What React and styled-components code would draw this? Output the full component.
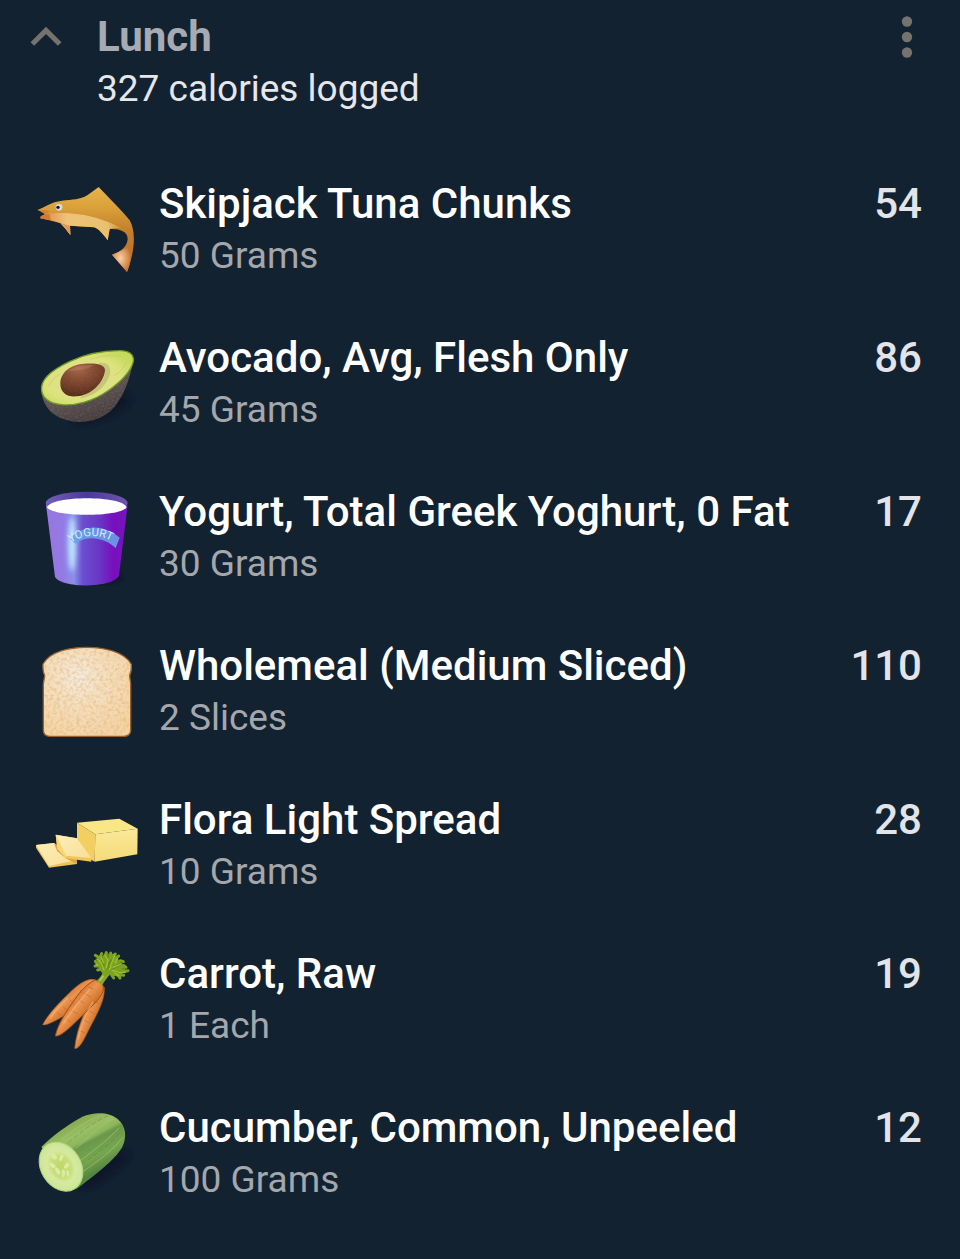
import React, { useState } from 'react';
import styled, { createGlobalStyle } from 'styled-components';

const GlobalStyle = createGlobalStyle`
  * {
    box-sizing: border-box;
  }
  body {
    margin: 0;
    background: #132231;
    font-family: Roboto, "Liberation Sans", sans-serif;
  }
`
const Page = styled.main`
  width: 100%;
  padding-top: 11px;
  color: #ffffff;
`
const Header = styled.header`
  display: flex;
  align-items: flex-start;
  padding: 0 22px 0 15px;
  margin-bottom: 38px;
`
const IconButton = styled.button`
  display: flex;
  flex-shrink: 0;
  padding: 0;
  border: 0;
  margin-top: -5px;
  background: none;
  color: #757370;
  cursor: pointer;
`
const ButtonIcon = styled.svg`
  width: 62px;
  height: 62px;
  fill: currentColor;
`
const HeaderText = styled.div`
  flex: 1;
  min-width: 0;
  padding-left: 20px;
`
const MealName = styled.h1`
  margin: 0;
  font-size: 42px;
  font-weight: 700;
  line-height: 52px;
  color: #a6abb3;
`
const MealTotal = styled.p`
  margin: 0;
  font-size: 37px;
  line-height: 52px;
  color: #e6e7ea;
`
const FoodList = styled.ul`
  margin: 0;
  padding: 0;
  list-style: none;
`
const FoodRow = styled.li`
  display: flex;
  align-items: center;
  min-height: 154px;
  padding: 0 38px 0 30px;
`
const Picture = styled.svg`
  flex-shrink: 0;
  width: 115px;
  height: 108px;
  margin-right: 14px;
  overflow: visible;
`
const FoodText = styled.div`
  flex: 1;
  min-width: 0;
`
const TitleLine = styled.div`
  display: flex;
  justify-content: space-between;
  gap: 16px;
  font-size: 42px;
  font-weight: 500;
  line-height: 52px;
`
const FoodName = styled.h2`
  margin: 0;
  font: inherit;
`
const Calories = styled.span`
  color: #e2e4e8;
`
const Amount = styled.p`
  margin: 0;
  font-size: 37px;
  line-height: 52px;
  color: #a4a7ab;
`

const Tuna = () => (
  <Picture viewBox="0 -6 345 324" aria-hidden="true">
    <defs>
      <linearGradient id="tunaBody" x1="0" y1="0" x2="0" y2="1">
        <stop offset="0" stopColor="#e6b548" />
        <stop offset="0.25" stopColor="#d9a03a" />
        <stop offset="0.5" stopColor="#c4802c" />
        <stop offset="1" stopColor="#b96d28" />
      </linearGradient>
      <radialGradient id="tunaTail" cx="0.45" cy="0.45" r="0.6">
        <stop offset="0" stopColor="#fbd2a4" />
        <stop offset="1" stopColor="#c66f2f" />
      </radialGradient>
      <linearGradient id="tunaBelly" x1="0" y1="0" x2="1" y2="0">
        <stop offset="0" stopColor="#e19a54" />
        <stop offset="0.25" stopColor="#efc27b" />
        <stop offset="0.8" stopColor="#e9c070" />
        <stop offset="1" stopColor="#cf8a35" />
      </linearGradient>
    </defs>
    <path d="M22 96 C48 86 62 72 96 68 C128 65 150 65 172 52 L206 27 C240 64 278 99 299 127 C317 157 317 214 291 282 L246 230 C272 222 291 207 293 184 C294 161 270 151 239 153 L233 187 C219 167 206 153 193 148 L120 143 L121 171 C111 158 101 145 91 135 C65 129 48 125 31 121 L32 115 L45 109 C43 103 38 101 22 96 Z" fill="url(#tunaBody)" />
    <path d="M56 108 C114 99 208 112 276 152 C262 149 251 150 239 153 L233 187 C219 167 206 153 193 148 L120 143 L121 171 C111 158 101 145 91 135 C75 131 66 128 60 124 Z" fill="url(#tunaBelly)" />
    <path d="M31 121 L33 115 L45 109 L58 108 L62 127 Z" fill="#d27a35" />
    <path d="M91 135 L120 143 L121 171 C111 158 101 145 91 135 Z" fill="#e09a56" />
    <path d="M246 230 C266 223 282 214 294 207 C307 229 302 256 291 282 Z" fill="url(#tunaTail)" />
    <path d="M24 96 L45 109 L60 100 C49 95 36 96 24 96 Z" fill="#d9812f" />
    <circle cx="87" cy="88" r="10" fill="#d9dde0" />
    <circle cx="84" cy="88" r="5" fill="#14181c" />
  </Picture>
)

const Avocado = () => (
  <Picture viewBox="0 -15 345 324" aria-hidden="true">
    <defs>
      <linearGradient id="avoSkin" x1="0" y1="0" x2="0.5" y2="1">
        <stop offset="0" stopColor="#67705b" />
        <stop offset="0.6" stopColor="#5d5353" />
        <stop offset="1" stopColor="#443c3d" />
      </linearGradient>
      <radialGradient id="avoFlesh" cx="0.45" cy="0.52" r="0.6">
        <stop offset="0" stopColor="#e4df93" />
        <stop offset="0.7" stopColor="#dce27d" />
        <stop offset="1" stopColor="#c6da5e" />
      </radialGradient>
      <radialGradient id="avoStone" cx="0.4" cy="0.15" r="0.85">
        <stop offset="0" stopColor="#a5664a" />
        <stop offset="0.5" stopColor="#7f462d" />
        <stop offset="1" stopColor="#552a18" />
      </radialGradient>
      <filter id="avoBlur" x="-20%" y="-50%" width="140%" height="200%">
        <feGaussianBlur stdDeviation="9" />
      </filter>
      <filter id="avoGrain" x="0" y="0" width="100%" height="100%" colorInterpolationFilters="sRGB">
        <feTurbulence type="fractalNoise" baseFrequency="0.18" numOctaves="2" />
        <feColorMatrix values="0 0 0 0 0.58  0 0 0 0 0.5  0 0 0 0 0.46  1.6 0 0 0 -0.65" />
        <feComposite in2="SourceGraphic" operator="in" />
      </filter>
    </defs>
    <ellipse cx="215" cy="222" rx="95" ry="30" fill="#0b1726" filter="url(#avoBlur)" transform="rotate(-22 215 222)" />
    <path d="M33 161 C36 205 58 235 94 250 C139 270 202 263 242 228 C277 196 299 137 311 73 Z" fill="url(#avoSkin)" />
    <path d="M33 161 C36 205 58 235 94 250 C139 270 202 263 242 228 C277 196 299 137 311 73 Z" fill="#fff" filter="url(#avoGrain)" opacity="0.45" />
    <path d="M35 167 C29 132 69 103 120 79 C165 58 217 47 267 47 C296 46 313 58 310 79 C304 106 273 140 233 168 C190 198 138 213 94 209 C60 206 38 190 35 167 Z" fill="url(#avoFlesh)" stroke="#6f9a26" strokeWidth="4" />
    <path d="M205 84 C231 79 244 94 240 116 C230 158 185 187 147 190 C181 174 220 143 226 111 Z" fill="#aeb06d" opacity="0.55" />
    <path d="M91 147 C91 109 125 88 163 86 C197 84 226 88 225 107 C221 142 185 180 141 184 C112 187 92 174 91 147 Z" fill="url(#avoStone)" />
    <path d="M91 147 C91 109 125 88 163 86 C197 84 226 88 225 107 C221 142 185 180 141 184 C112 187 92 174 91 147 Z" fill="#fff" filter="url(#avoGrain)" opacity="0.25" />
    <path d="M112 109 C133 91 164 90 190 91 C175 104 138 108 112 109 Z" fill="#c58e71" opacity="0.35" />
    <path d="M180 73 C213 63 247 59 274 64 M253 122 C274 108 286 92 290 80 M56 154 C64 136 77 125 90 117" fill="none" stroke="#c3cb62" strokeWidth="2" />
  </Picture>
)

const Yogurt = () => (
  <Picture viewBox="0 0 345 324" aria-hidden="true">
    <defs>
      <linearGradient id="potSide" x1="0" y1="0" x2="1" y2="0">
        <stop offset="0" stopColor="#9877df" />
        <stop offset="0.2" stopColor="#9479e5" />
        <stop offset="0.34" stopColor="#8a90ea" />
        <stop offset="0.45" stopColor="#6a4fcf" />
        <stop offset="0.65" stopColor="#6a36c5" />
        <stop offset="0.82" stopColor="#780fbd" />
        <stop offset="1" stopColor="#7416b9" />
      </linearGradient>
      <linearGradient id="potRim" x1="0" y1="0" x2="1" y2="0">
        <stop offset="0" stopColor="#7560b8" />
        <stop offset="0.5" stopColor="#49389e" />
        <stop offset="1" stopColor="#6f55ae" />
      </linearGradient>
      <filter id="potBlur" x="-100%" y="-30%" width="300%" height="160%">
        <feGaussianBlur stdDeviation="8" />
      </filter>
      <path id="potArc" d="M122 177 Q186 132 262 181" />
    </defs>
    <ellipse cx="215" cy="280" rx="60" ry="16" fill="#0b1624" filter="url(#potBlur)" />
    <path d="M48 62 L75 278 C91 313 253 314 267 274 L293 62 Z" fill="url(#potSide)" />
    <ellipse cx="126" cy="180" rx="11" ry="82" fill="#bfeaff" filter="url(#potBlur)" />
    <ellipse cx="170" cy="57" rx="123" ry="34" fill="url(#potRim)" />
    <path d="M51 70 C65 34 277 34 290 70 C271 100 70 100 51 70 Z" fill="#fefeff" />
    <path d="M120 163 C160 122 219 119 269 161 L257 192 C220 160 173 153 136 179 Z" fill="#69a0e8" opacity="0.9" />
    <text fontFamily="Roboto, sans-serif" fontSize="34" fontWeight="400" fill="#d9ecff">
      <textPath href="#potArc">YOGURT</textPath>
    </text>
  </Picture>
)

const Bread = () => (
  <Picture viewBox="0 0 345 324" aria-hidden="true">
    <defs>
      <radialGradient id="breadCrumb" cx="0.4" cy="0.33" r="0.7">
        <stop offset="0" stopColor="#f3eadf" />
        <stop offset="0.45" stopColor="#f3dfc0" />
        <stop offset="1" stopColor="#f3d5a8" />
      </radialGradient>
      <filter id="breadGrain" x="0" y="0" width="100%" height="100%" colorInterpolationFilters="sRGB">
        <feTurbulence type="fractalNoise" baseFrequency="0.1" numOctaves="2" />
        <feColorMatrix values="0 0 0 0 0.9  0 0 0 0 0.68  0 0 0 0 0.4  3 0 0 0 -1.25" />
        <feComposite in2="SourceGraphic" operator="in" />
      </filter>
    </defs>
    <path d="M39 78 C61 40 119 28 171 28 C225 28 283 42 304 79 C305 94 303 104 299 112 C299 122 302 130 302 140 L302 278 C301 290 293 295 280 295 L60 295 C46 295 40 287 40 276 L40 140 C40 130 44 122 44 112 C40 104 38 94 39 78 Z" fill="url(#breadCrumb)" stroke="#96612e" strokeWidth="4" />
    <path d="M42 80 C62 42 119 31 171 31 C225 31 280 45 301 81 L296 112 L299 140 L299 277 C298 287 291 292 280 292 L60 292 C48 292 43 286 43 276 L43 140 L47 112 Z" fill="#fff" filter="url(#breadGrain)" opacity="0.45" />
  </Picture>
)

const Spread = () => (
  <Picture viewBox="0 -38 345 324" aria-hidden="true">
    <defs>
      <linearGradient id="spreadFront" x1="0" y1="0" x2="0" y2="1">
        <stop offset="0" stopColor="#fae998" />
        <stop offset="1" stopColor="#f5db78" />
      </linearGradient>
      <linearGradient id="spreadSlice" x1="0" y1="0" x2="1" y2="1">
        <stop offset="0" stopColor="#fdedb8" />
        <stop offset="1" stopColor="#f9df98" />
      </linearGradient>
    </defs>
    <path d="M18 121 L72 115 L140 166 L141 178 L57 189 L18 129 Z" fill="#eec354" />
    <path d="M18 121 L72 115 L140 166 L57 184 Z" fill="url(#spreadSlice)" />
    <path d="M72 117 L82 140 L107 161 L141 178 L141 165 L100 127 Z" fill="#dba544" />
    <path d="M141 54 L268 42 L323 72 L196 89 Z" fill="#f9e785" />
    <path d="M141 54 L196 89 L194 171 L181 164 L141 101 Z" fill="#f3cf61" />
    <path d="M196 89 L323 72 L322 149 L194 171 Z" fill="url(#spreadFront)" />
    <path d="M77 90 L141 101 L184 160 L184 171 L108 161 L82 132 Z" fill="#efc65a" />
    <path d="M77 90 L141 101 L184 160 L108 153 Z" fill="url(#spreadSlice)" />
    <path d="M77 90 L108 153 L108 161 L82 132 Z" fill="#f5d777" />
  </Picture>
)

const Carrot = () => (
  <Picture viewBox="0 8 345 324" aria-hidden="true">
    <defs>
      <linearGradient id="carrotRoot" x1="0.2" y1="0.2" x2="0.8" y2="0.8">
        <stop offset="0.2" stopColor="#cf7430" />
        <stop offset="0.45" stopColor="#ea9450" />
        <stop offset="0.75" stopColor="#c8691f" />
      </linearGradient>
    </defs>
    <path d="M197 125 C179 179 142 237 134 315 C143 319 157 300 169 274 C195 221 226 176 223 132 Z" fill="url(#carrotRoot)" stroke="#a8571e" strokeWidth="2" />
    <path d="M196 109 C167 103 139 129 118 149 C83 182 56 211 38 244 C51 250 102 217 139 196 C174 174 207 145 196 109 Z" fill="url(#carrotRoot)" stroke="#a8571e" strokeWidth="2" />
    <path d="M193 111 C162 127 139 160 118 192 C98 222 83 247 76 278 C95 281 130 242 166 208 C204 172 224 149 220 130 C214 115 205 109 193 111 Z" fill="url(#carrotRoot)" stroke="#a04c16" strokeWidth="3" />
    <path d="M120 170 L133 184 M100 190 L111 202 M82 207 L91 216 M164 151 L184 162 M148 169 L163 181 M125 202 L142 211 M110 227 L122 237 M192 174 L207 180 M178 203 L193 211 M163 231 L177 238 M151 263 L163 268 M150 140 L156 148 M176 132 L189 137" stroke="#bb5f20" strokeWidth="3" strokeLinecap="round" opacity="0.5" />
    <path d="M112 165 C88 188 71 206 62 223 M179 138 C149 173 119 209 101 239 M188 177 C165 216 151 250 145 286" fill="none" stroke="#ffcb98" strokeWidth="5" strokeLinecap="round" opacity="0.4" />
    <path d="M198 115 C209 104 216 96 222 81 L242 91 C230 104 223 114 217 125 C210 119 205 116 198 115 Z" fill="#86a531" />
    <path d="M209 112 L229 86" stroke="#b3c94f" strokeWidth="5" />
    <path d="M224 94 L206 78 L204 60 L196 46 L214 40 L226 30 L246 32 L262 40 L268 54 L284 66 L286 80 L272 94 L254 98 L236 92 Z" fill="#688c1e" />
    <g fill="none" stroke="#7ca320" strokeWidth="9" strokeLinecap="round" strokeLinejoin="round">
      <path d="M224 94 L208 66 L196 54 M210 68 L195 68 M209 65 L209 44 L196 36 M209 45 L215 31 M224 92 L229 62 L222 44 L229 28 M229 58 L242 41 L242 29 M240 44 L256 32 M228 92 L249 67 L252 49 L266 38 M250 65 L271 52 L280 55 M234 89 L259 78 L282 67 L288 72 M260 78 L284 84 L294 82 M242 89 L264 96 L270 104 M243 91 L251 104 M263 93 L281 96 M215 77 L203 80" />
    </g>
    <g fill="none" stroke="#a3c032" strokeWidth="4" strokeLinecap="round">
      <path d="M222 80 L214 59 L203 48 M229 72 L234 52 L226 37 M241 67 L249 49 L254 36 M250 72 L273 62 M247 82 L270 88 L286 87 M204 66 L198 62 M254 89 L266 97 M221 58 L213 41 M262 46 L256 58 M238 78 L243 70" />
    </g>
  </Picture>
)

const Cucumber = () => (
  <Picture viewBox="0 -9 345 324" aria-hidden="true">
    <defs>
      <linearGradient id="cukeSkin" x1="0.35" y1="0.15" x2="0.7" y2="0.75">
        <stop offset="0" stopColor="#86ad50" />
        <stop offset="0.22" stopColor="#9abf66" />
        <stop offset="0.38" stopColor="#8db65c" />
        <stop offset="0.45" stopColor="#6a984a" />
        <stop offset="0.75" stopColor="#77a650" />
        <stop offset="1" stopColor="#568541" />
      </linearGradient>
      <radialGradient id="cukeFace">
        <stop offset="0" stopColor="#bfd866" />
        <stop offset="0.45" stopColor="#c6df7c" />
        <stop offset="0.65" stopColor="#d7e9a1" />
        <stop offset="1" stopColor="#cbe698" />
      </radialGradient>
      <filter id="cukeBlur" x="-20%" y="-50%" width="140%" height="200%">
        <feGaussianBlur stdDeviation="10" />
      </filter>
    </defs>
    <ellipse cx="222" cy="200" rx="92" ry="26" fill="#0c1929" filter="url(#cukeBlur)" transform="rotate(-35 222 200)" />
    <path d="M34 132 C66 99 116 63 157 41 C192 26 238 26 263 48 C289 70 291 103 277 132 C257 169 190 221 139 258 Z" fill="url(#cukeSkin)" />
    <path d="M92 111 C135 76 183 45 219 36 M137 138 C179 98 218 62 249 48 M153 171 C201 135 243 103 267 74 M158 206 C205 174 249 142 278 103" fill="none" stroke="#a6c878" strokeWidth="3" opacity="0.6" />
    <path d="M115 119 C158 83 196 54 233 39 M154 184 C205 149 247 117 273 86" fill="none" stroke="#527f3c" strokeWidth="3" strokeDasharray="14 8" opacity="0.4" />
    <ellipse cx="93" cy="191" rx="60" ry="78" transform="rotate(-32 93 191)" fill="url(#cukeFace)" stroke="#b4d779" strokeWidth="3" />
    <g fill="#dbeca2">
      <ellipse cx="72" cy="160" rx="7" ry="11" transform="rotate(-35 72 160)" />
      <ellipse cx="94" cy="164" rx="5" ry="11" transform="rotate(20 94 164)" />
      <ellipse cx="67" cy="187" rx="6" ry="11" transform="rotate(-52 67 187)" />
      <ellipse cx="83" cy="204" rx="6" ry="11" transform="rotate(-28 83 204)" />
      <ellipse cx="100" cy="211" rx="5" ry="12" />
      <ellipse cx="113" cy="211" rx="4" ry="10" transform="rotate(-10 113 211)" />
      <ellipse cx="110" cy="188" rx="6" ry="10" transform="rotate(35 110 188)" />
    </g>
  </Picture>
)

const foods = [
  { name: 'Skipjack Tuna Chunks', amount: '50 Grams', calories: 54, Art: Tuna },
  { name: 'Avocado, Avg, Flesh Only', amount: '45 Grams', calories: 86, Art: Avocado },
  { name: 'Yogurt, Total Greek Yoghurt, 0 Fat', amount: '30 Grams', calories: 17, Art: Yogurt },
  { name: 'Wholemeal (Medium Sliced)', amount: '2 Slices', calories: 110, Art: Bread },
  { name: 'Flora Light Spread', amount: '10 Grams', calories: 28, Art: Spread },
  { name: 'Carrot, Raw', amount: '1 Each', calories: 19, Art: Carrot },
  { name: 'Cucumber, Common, Unpeeled', amount: '100 Grams', calories: 12, Art: Cucumber },
]

const App = () => {
  const [open, setOpen] = useState(true)

  return (
    <Page>
      <GlobalStyle />
      <Header>
        <IconButton type="button" aria-label="Toggle lunch" aria-expanded={open} onClick={() => setOpen(!open)}>
          <ButtonIcon viewBox="0 0 24 24">
            {open
              ? <path d="M12 8l-6 6 1.41 1.41L12 10.83l4.59 4.58L18 14z" />
              : <path d="M12 16l-6-6 1.41-1.41L12 13.17l4.59-4.58L18 10z" />}
          </ButtonIcon>
        </IconButton>
        <HeaderText>
          <MealName>Lunch</MealName>
          <MealTotal>327 calories logged</MealTotal>
        </HeaderText>
        <IconButton type="button" aria-label="Lunch options">
          <ButtonIcon viewBox="0 0 24 24">
            <circle cx="12" cy="6" r="2" />
            <circle cx="12" cy="12" r="2" />
            <circle cx="12" cy="18" r="2" />
          </ButtonIcon>
        </IconButton>
      </Header>
      {open && (
        <FoodList>
          {foods.map(({ name, amount, calories, Art }) => (
            <FoodRow key={name}>
              <Art />
              <FoodText>
                <TitleLine>
                  <FoodName>{name}</FoodName>
                  <Calories>{calories}</Calories>
                </TitleLine>
                <Amount>{amount}</Amount>
              </FoodText>
            </FoodRow>
          ))}
        </FoodList>
      )}
    </Page>
  )
}

export default App
